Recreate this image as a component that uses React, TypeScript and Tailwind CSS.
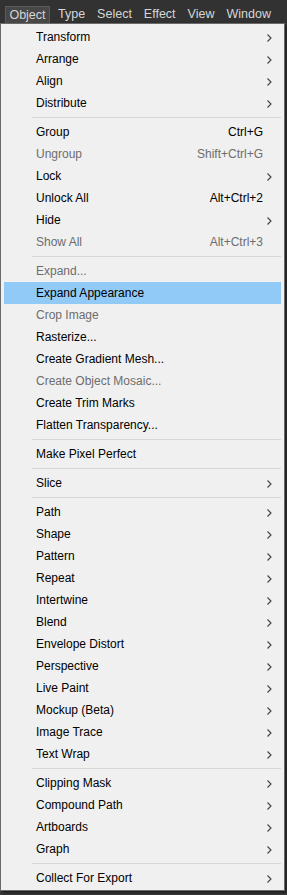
import React from 'react';

type Item =
  | { sep: true }
  | { label: string; shortcut?: string; sub?: boolean; disabled?: boolean; active?: boolean };

const items: Item[] = [
  { label: 'Transform', sub: true },
  { label: 'Arrange', sub: true },
  { label: 'Align', sub: true },
  { label: 'Distribute', sub: true },
  { sep: true },
  { label: 'Group', shortcut: 'Ctrl+G' },
  { label: 'Ungroup', shortcut: 'Shift+Ctrl+G', disabled: true },
  { label: 'Lock', sub: true },
  { label: 'Unlock All', shortcut: 'Alt+Ctrl+2' },
  { label: 'Hide', sub: true },
  { label: 'Show All', shortcut: 'Alt+Ctrl+3', disabled: true },
  { sep: true },
  { label: 'Expand...', disabled: true },
  { label: 'Expand Appearance', active: true },
  { label: 'Crop Image', disabled: true },
  { label: 'Rasterize...' },
  { label: 'Create Gradient Mesh...' },
  { label: 'Create Object Mosaic...', disabled: true },
  { label: 'Create Trim Marks' },
  { label: 'Flatten Transparency...' },
  { sep: true },
  { label: 'Make Pixel Perfect' },
  { sep: true },
  { label: 'Slice', sub: true },
  { sep: true },
  { label: 'Path', sub: true },
  { label: 'Shape', sub: true },
  { label: 'Pattern', sub: true },
  { label: 'Repeat', sub: true },
  { label: 'Intertwine', sub: true },
  { label: 'Blend', sub: true },
  { label: 'Envelope Distort', sub: true },
  { label: 'Perspective', sub: true },
  { label: 'Live Paint', sub: true },
  { label: 'Mockup (Beta)', sub: true },
  { label: 'Image Trace', sub: true },
  { label: 'Text Wrap', sub: true },
  { sep: true },
  { label: 'Clipping Mask', sub: true },
  { label: 'Compound Path', sub: true },
  { label: 'Artboards', sub: true },
  { label: 'Graph', sub: true },
  { sep: true },
  { label: 'Collect For Export', sub: true },
];

const Chevron = () => (
  <svg width="5" height="8" viewBox="0 0 5 8" className="absolute right-[9px] top-[8px]">
    <path d="M0.5 0.5 L4 4 L0.5 7.5" fill="none" stroke="#404040" strokeWidth="1.1" />
  </svg>
);

const App: React.FC = () => {
  return (
    <div
      className="w-[287px] h-[895px] bg-[#3a3a3a] overflow-hidden"
      style={{ fontFamily: '"Liberation Sans", Arial, sans-serif' }}
    >
      {/* menu bar */}
      <div className="h-[23px] bg-[#323232] flex items-end text-[12.5px] text-[#d6d6d6]">
        <div className="ml-[5px] h-[17px] w-[45px] bg-[#474747] border border-b-0 border-[#5a5a5a] flex items-center justify-center leading-none">
          Object
        </div>
        <div className="h-[17px] flex items-center leading-none gap-[12px] ml-[8px]">
          <span>Type</span>
          <span>Select</span>
          <span>Effect</span>
          <span>View</span>
          <span>Window</span>
        </div>
      </div>

      {/* dropdown */}
      <div className="w-[285px] bg-[#f0f0f0] border border-[#6a6a6a] px-[3px] pt-[2px] pb-[1px] shadow-[2px_2px_3px_rgba(0,0,0,0.5)] text-[12px]">
        {items.map((it, i) =>
          'sep' in it ? (
            <div key={i} className="h-[7px] flex items-center pl-[28px]">
              <div className="h-px w-full bg-[#d7d7d7]" />
            </div>
          ) : (
            <div
              key={i}
              className={`relative h-[22px] flex items-center pl-[32px] pr-[18px] ${
                it.active ? 'bg-[#91c9f7]' : ''
              } ${it.disabled ? 'text-[#6d6d6d]' : 'text-black'}`}
            >
              <span className="flex-1">{it.label}</span>
              {it.shortcut && <span>{it.shortcut}</span>}
              {it.sub && <Chevron />}
            </div>
          )
        )}
      </div>
    </div>
  );
};

export default App;
